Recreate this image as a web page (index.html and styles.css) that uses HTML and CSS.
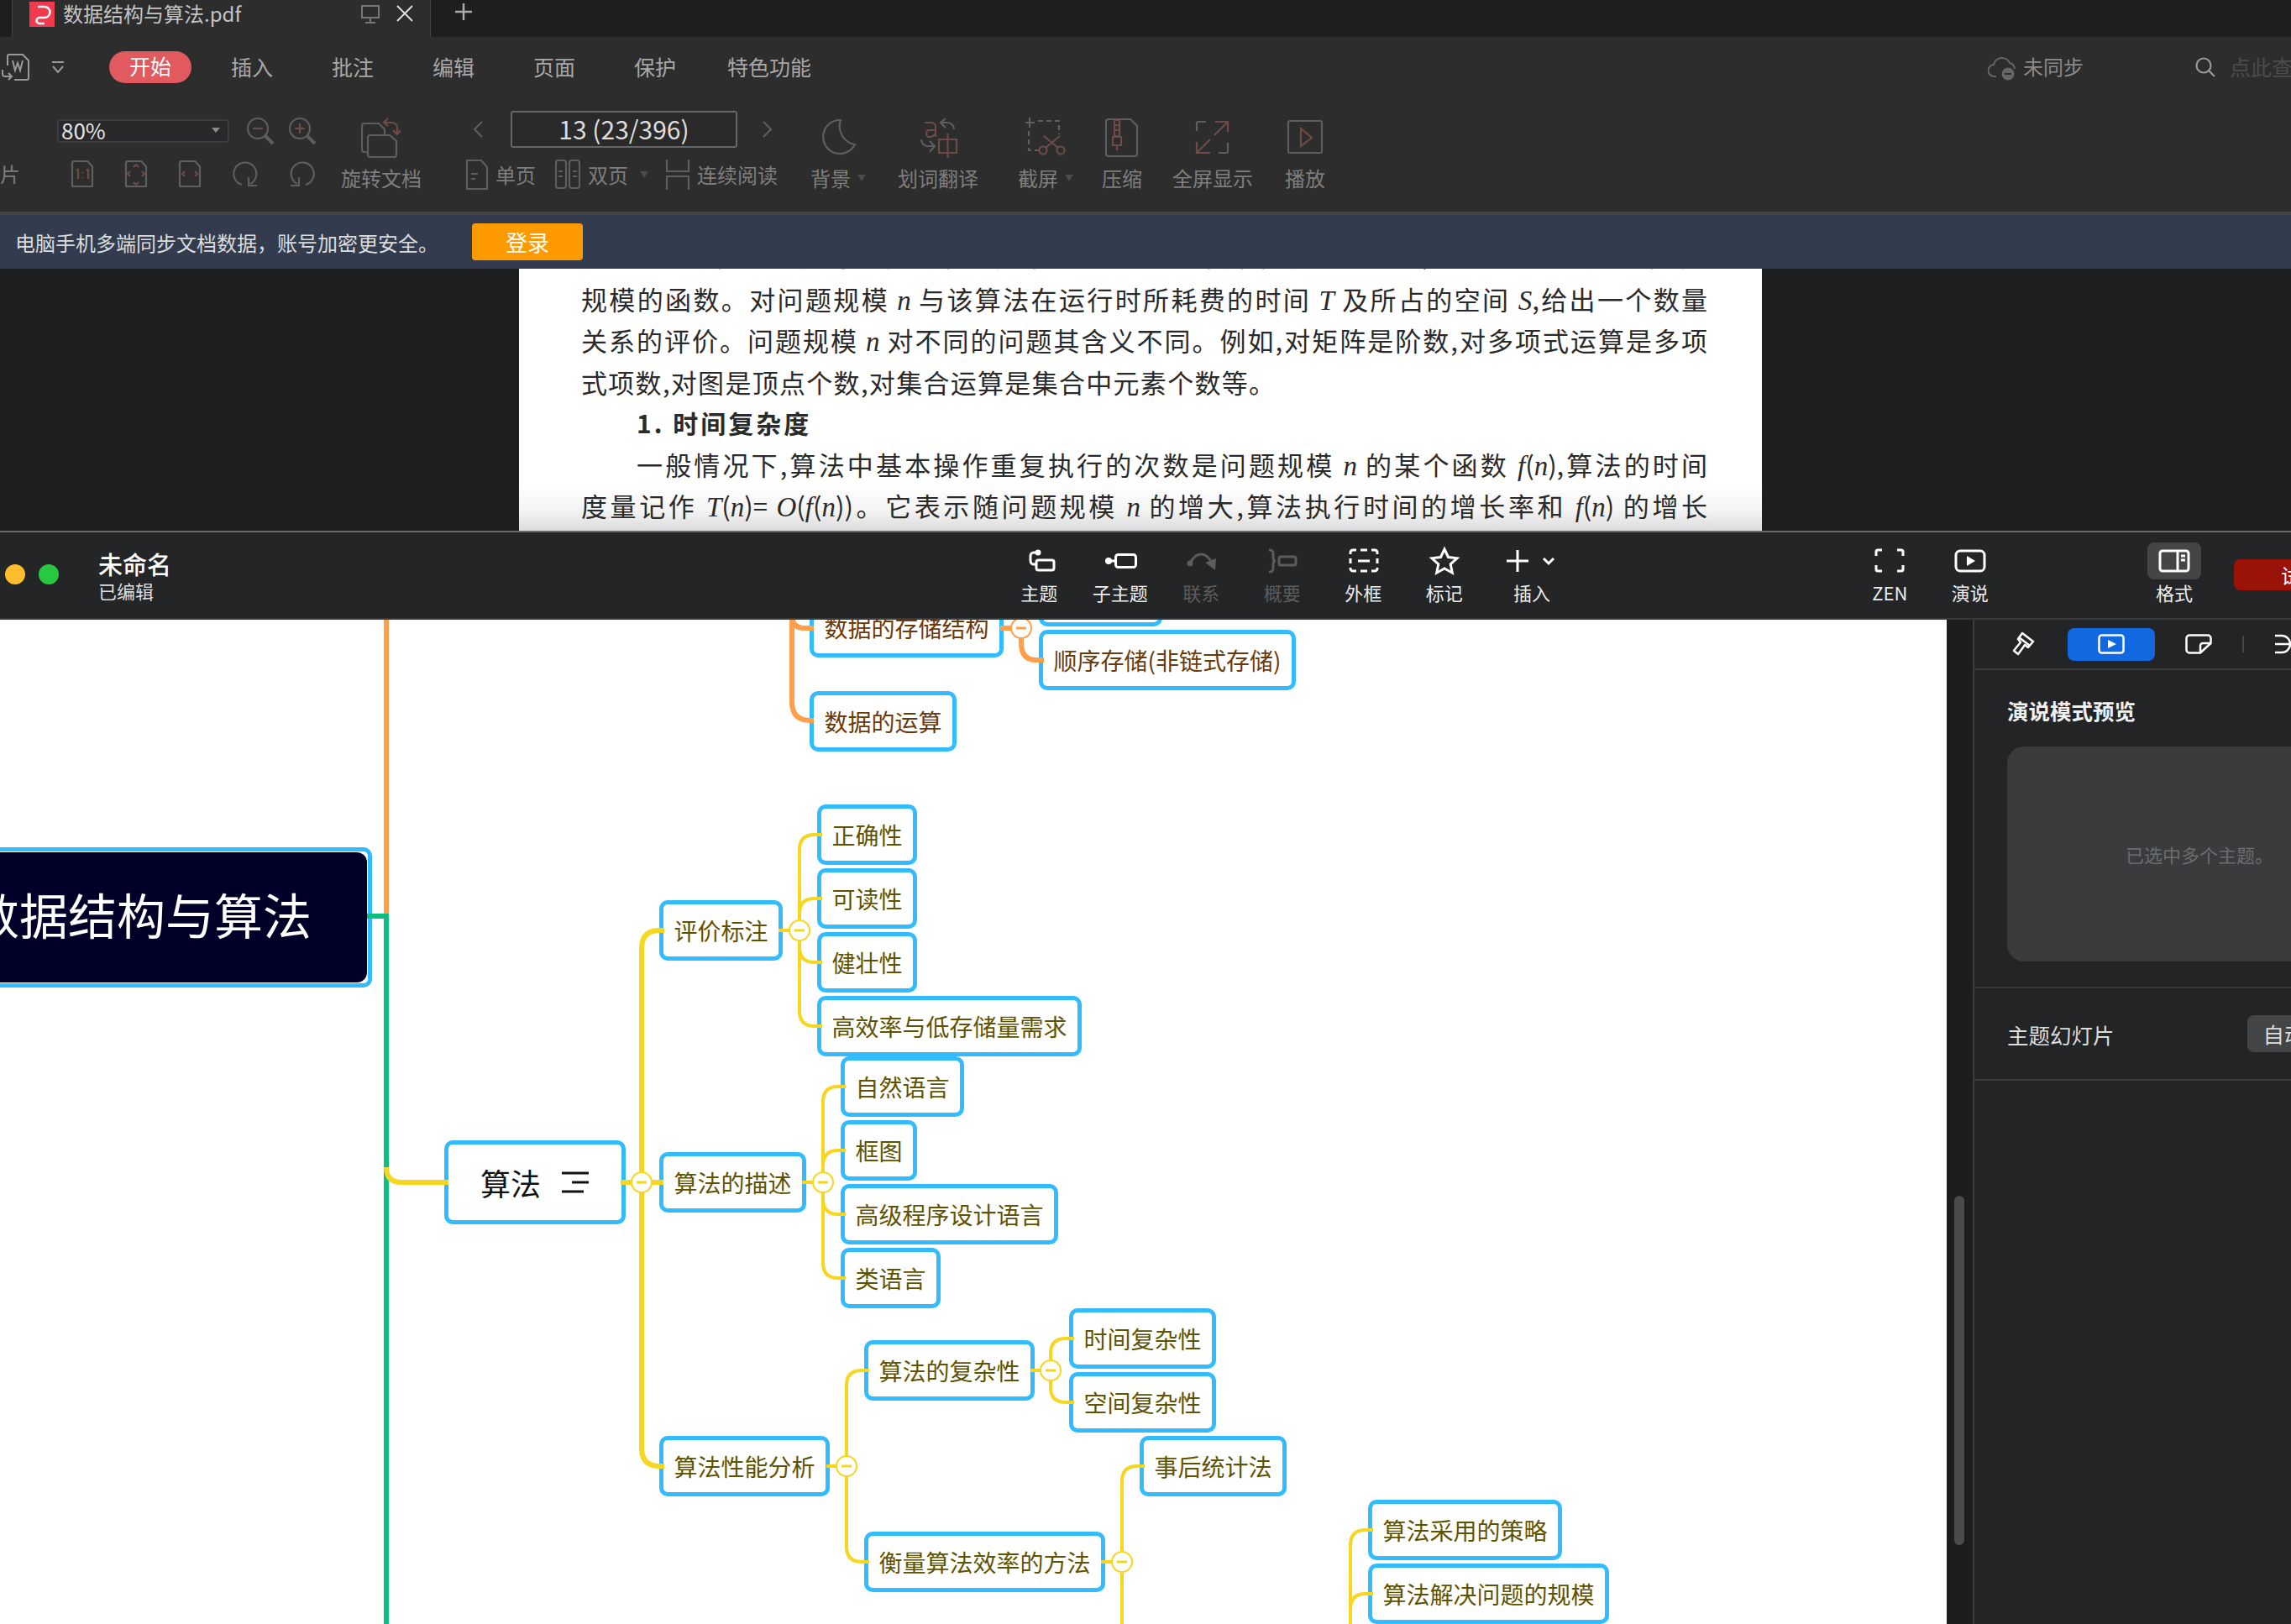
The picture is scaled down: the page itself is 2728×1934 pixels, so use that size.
FILE: index.html
```html
<!DOCTYPE html>
<html lang="zh-CN">
<head>
    <meta charset="UTF-8">
    <meta name="viewport" content="width=device-width, initial-scale=1.0">
    <title>数据结构与算法</title>
    <link rel="stylesheet" href="styles.css">
</head>
<body>
    <!-- pdf reader window -->
    <section class="pdf-win">
        <div class="tabbar">
            <div class="tab">
                <svg class="tab-logo" width="30" height="30" viewBox="0 0 30 30"><rect width="30" height="30" fill="#f23a4e"/><path d="M10 6h8a6 6 0 0 1 0 13h-6v-0M12 19a3.500 3.500 0 0 0 0 7h6" fill="none" stroke="#fff" stroke-width="2.500"/></svg>
                <span class="tab-name">数据结构与算法.pdf</span>
                <svg class="tab-pin" width="24" height="24" viewBox="0 0 24 24"><path d="M2 2h20v14H2zM12 16v6M6 22h12" fill="none" stroke="#777" stroke-width="2"/></svg>
                <svg class="tab-close" width="20" height="20" viewBox="0 0 20 20"><path d="M1 1l18 18M19 1L1 19" stroke="#ddd" stroke-width="2"/></svg>
            </div>
            <svg class="tab-add" width="20" height="20" viewBox="0 0 20 20"><path d="M10 0v20M0 10h20" stroke="#aaa" stroke-width="2.500"/></svg>
        </div>

        <div class="ribbon">
            <div class="menu">
                <svg class="menu-doc" width="34" height="32" viewBox="0 0 34 32"><path d="M7 14V3a2 2 0 0 1 2-2h16l7 7v21a2 2 0 0 1-2 2H15M13 8l3 12 3-9 3 9 3-12M1 19v5a3 3 0 0 0 3 3h7M8 23l4 4-4 4" fill="none" stroke="#9a9a9a" stroke-width="2"/></svg>
                <svg class="menu-drop" width="14" height="16" viewBox="0 0 14 16"><path d="M0 2h14M1 7l6 7 6-7" fill="none" stroke="#9a9a9a" stroke-width="2"/></svg>
                <span class="menu-on">开始</span>
                <span class="menu-item">插入</span>
                <span class="menu-item">批注</span>
                <span class="menu-item">编辑</span>
                <span class="menu-item">页面</span>
                <span class="menu-item">保护</span>
                <span class="menu-item menu-last">特色功能</span>
                <div class="menu-right">
                    <svg width="34" height="32" viewBox="0 0 34 32"><path d="M10 27H8a7 7 0 0 1-1-14 10 10 0 0 1 19-2 8 8 0 0 1 6 7" fill="none" stroke="#666" stroke-width="2"/><circle cx="24" cy="24" r="7.500" fill="#666"/><path d="M20 24h8" stroke="#2d2d2d" stroke-width="2"/></svg>
                    <span class="sync-text">未同步</span>
                    <svg class="search-ic" width="24" height="24" viewBox="0 0 24 24"><circle cx="10" cy="10" r="8.500" fill="none" stroke="#999" stroke-width="2.200"/><path d="M16 16l7 7" stroke="#999" stroke-width="2.200"/></svg>
                    <span class="search-text">点此查找命令</span>
                </div>
            </div>

            <div class="tools">
                <div class="view-col">
                    <div class="view-top">
                        <div class="zoom-select"><span>80%</span><i class="caret-sm"></i></div>
                        <svg class="ic zoom-ic" width="34" height="34" viewBox="0 0 34 34"><circle cx="14" cy="14" r="12"/><path d="M23 23l9 9" stroke-width="4"/><path class="ac" d="M8 14h12"/></svg>
                        <svg class="ic zoom-ic" width="34" height="34" viewBox="0 0 34 34"><circle cx="14" cy="14" r="12"/><path d="M23 23l9 9" stroke-width="4"/><path class="ac" d="M8 14h12M14 8v12"/></svg>
                    </div>
                    <div class="view-bottom">
                        <span class="tool-label cut-label">片</span>
                        <svg class="ic" width="28" height="32" viewBox="0 0 28 32"><path d="M2 3a2 2 0 0 1 2-2h16l6 6v23a1 1 0 0 1-1 1H3a1 1 0 0 1-1-1z"/><path class="ac" d="M7 12l2-1v11M14 14v1M14 20v1M19 12l2-1v11"/></svg>
                        <svg class="ic" width="28" height="32" viewBox="0 0 28 32"><path d="M2 3a2 2 0 0 1 2-2h16l6 6v23a1 1 0 0 1-1 1H3a1 1 0 0 1-1-1z"/><path class="ac" d="M11 8l3-3 3 3M11 26l3 3 3-3M7 13l-3 3 3 3M21 13l3 3-3 3"/></svg>
                        <svg class="ic" width="28" height="32" viewBox="0 0 28 32"><path d="M2 3a2 2 0 0 1 2-2h16l6 6v23a1 1 0 0 1-1 1H3a1 1 0 0 1-1-1z"/><path class="ac" d="M8 13l-3 3 3 3M20 13l3 3-3 3"/></svg>
                        <svg class="ic" width="32" height="32" viewBox="0 0 32 32"><path d="M12 29A13.500 13.500 0 1 1 22 28M20 20v10h10"/></svg>
                        <svg class="ic" width="32" height="32" viewBox="0 0 32 32"><path d="M20 29A13.500 13.500 0 1 0 10 28M12 20v10H2"/></svg>
                    </div>
                </div>

                <div class="tool tool-rotate">
                    <svg class="ic" width="48" height="48" viewBox="0 0 48 48"><path d="M8 41H4a3 3 0 0 1-3-3V10a3 3 0 0 1 3-3h17l7 7v7"/><path d="M11 21h23l8 7v16a3 3 0 0 1-3 3H11a3 3 0 0 1-3-3V24a3 3 0 0 1 3-3z"/><path class="ac" d="M32 1l-5 5 5 4M27 6h10a6 6 0 0 1 6 6v7M38 15l5 5 4-5"/></svg>
                    <span class="tool-label">旋转文档</span>
                </div>

                <div class="page-col">
                    <div class="page-top">
                        <svg class="ic" width="12" height="20" viewBox="0 0 12 20"><path d="M11 1L2 10l9 9"/></svg>
                        <div class="page-box">13 (23/396)</div>
                        <svg class="ic" width="12" height="20" viewBox="0 0 12 20"><path d="M1 1l9 9-9 9"/></svg>
                    </div>
                    <div class="page-bottom">
                        <svg class="ic" width="26" height="36" viewBox="0 0 26 36"><path d="M1 1h17l7 8v26H1z"/><path d="M6 17h8M6 23h5"/></svg>
                        <span class="tool-label">单页</span>
                        <svg class="ic dual-ic" width="30" height="36" viewBox="0 0 30 36"><rect x="1" y="1" width="12" height="33" rx="3"/><rect x="17" y="1" width="12" height="33" rx="3"/><path d="M4 14h5M4 20h5M21 14h5M21 20h5"/></svg>
                        <span class="tool-label">双页</span>
                        <i class="caret"></i>
                        <svg class="ic cont-ic" width="28" height="36" viewBox="0 0 28 36"><path d="M1 0v14h26V0M1 36V20h26v16"/></svg>
                        <span class="tool-label">连续阅读</span>
                    </div>
                </div>

                <div class="tool tool-bg">
                    <svg class="ic" width="48" height="48" viewBox="0 0 48 48"><path d="M27 3a20 20 0 1 0 17 29A22 22 0 0 1 27 3z"/></svg>
                    <div class="label-row"><span class="tool-label">背景</span><i class="caret"></i></div>
                </div>
                <div class="tool tool-trans">
                    <svg class="ic" width="48" height="48" viewBox="0 0 48 48"><path class="ac" d="M8 6h8a5 5 0 0 1 5 5v12M21 15H12a5 5 0 0 0 0 8h4l5-3"/><path d="M33 1l-6 5 6 6M27 6h8a8 8 0 0 1 8 8M4 26a8 8 0 0 0 8 8h8M14 28l6 6-6 7"/><path class="ac" d="M25 26h21v16H25zM35.500 19v29"/></svg>
                    <span class="tool-label">划词翻译</span>
                </div>
                <div class="tool tool-shot">
                    <svg class="ic" width="48" height="48" viewBox="0 0 48 48"><path d="M0 6h11M5 0v12"/><path stroke-dasharray="6 4" d="M15 4h25v16M4 16v23h14"/><path class="ac" d="M24 36L41 22M39 36L22 22"/><circle class="ac" cx="21" cy="39" r="4.500"/><circle class="ac" cx="42" cy="39" r="4.500"/></svg>
                    <div class="label-row"><span class="tool-label">截屏</span><i class="caret"></i></div>
                </div>
                <div class="tool tool-zip">
                    <svg class="ic" width="48" height="48" viewBox="0 0 48 48"><path d="M8 2h26l8 8v33a3 3 0 0 1-3 3H8a3 3 0 0 1-3-3V5a3 3 0 0 1 3-3z"/><path class="ac" d="M15 3h6v19h-6zM15 9h6M15 15h6M13 23h10v10H13zM18 33v6"/></svg>
                    <span class="tool-label">压缩</span>
                </div>
                <div class="tool tool-full">
                    <svg class="ic" width="48" height="48" viewBox="0 0 48 48"><path d="M5 16V7a2 2 0 0 1 2-2h9M42 30v10a2 2 0 0 1-2 2h-9"/><path class="ac" d="M27 5h15v12M42 5L26 21M21 42H5V29M5 42l16-16"/></svg>
                    <span class="tool-label">全屏显示</span>
                </div>
                <div class="tool tool-play">
                    <svg class="ic" width="48" height="48" viewBox="0 0 48 48"><rect x="4" y="4" width="40" height="38" rx="2"/><path class="ac" d="M19 13v21l13-10z"/></svg>
                    <span class="tool-label">播放</span>
                </div>
            </div>
        </div>

        <div class="banner">
            <span class="banner-text">电脑手机多端同步文档数据，账号加密更安全。</span>
            <span class="banner-btn">登录</span>
        </div>

        <div class="pdf-view">
            <div class="paper">
                <p class="line line-first">一个算法的复杂度是算法运行所需要的计算机资源的量，它是一个关于问题</p>
                <p class="line">规模的函数。对问题规模 <em>n</em> 与该算法在运行时所耗费的时间 <em>T</em> 及所占的空间 <em>S</em>,给出一个数量</p>
                <p class="line">关系的评价。问题规模 <em>n</em> 对不同的问题其含义不同。例如,对矩阵是阶数,对多项式运算是多项</p>
                <p class="line line-end">式项数,对图是顶点个数,对集合运算是集合中元素个数等。</p>
                <p class="line line-head"><b>1. 时间复杂度</b></p>
                <p class="line line-indent">一般情况下,算法中基本操作重复执行的次数是问题规模 <em>n</em> 的某个函数 <em>f</em>(<em>n</em>),算法的时间</p>
                <p class="line">度量记作 <em>T</em>(<em>n</em>)= <em>O</em>(<em>f</em>(<em>n</em>))。它表示随问题规模 <em>n</em> 的增大,算法执行时间的增长率和 <em>f</em>(<em>n</em>) 的增长</p>
            </div>
        </div>
    </section>

    <!-- mind map window -->
    <section class="mind-win">
        <header class="mind-head">
            <div class="mind-left">
                <i class="dot dot-yellow"></i>
                <i class="dot dot-green"></i>
                <div class="mind-title">
                    <div class="title-main">未命名</div>
                    <div class="title-sub">已编辑</div>
                </div>
            </div>

            <div class="mtool">
                <svg class="mic" viewBox="0 0 44 44"><circle class="solid" cx="21" cy="12" r="3.500"/><path d="M19 12h-3a4 4 0 0 0-4 4v6a4 4 0 0 0 4 4h3"/><rect x="19" y="21" width="21" height="12" rx="2.500"/></svg>
                <span>主题</span>
            </div>
            <div class="mtool">
                <svg class="mic" viewBox="0 0 44 44"><circle class="solid" cx="8" cy="22" r="4"/><path d="M8 22h8"/><rect x="16.500" y="14.500" width="24" height="15" rx="3"/></svg>
                <span>子主题</span>
            </div>
            <div class="mtool mtool-off">
                <svg class="mic" viewBox="0 0 44 44"><circle class="solid" cx="9" cy="25" r="3.500"/><path d="M9 25C16 10 28 11 35 24"/><path class="solid" d="M27 24l13-5-1 14z"/></svg>
                <span>联系</span>
            </div>
            <div class="mtool mtool-off">
                <svg class="mic" viewBox="0 0 44 44"><path d="M6 9c4 0 5 1 5 4v5c0 3 1 4 3 4-2 0-3 1-3 4v5c0 3-1 4-5 4"/><rect x="18" y="17" width="20" height="10" rx="2"/></svg>
                <span>概要</span>
            </div>
            <div class="mtool">
                <svg class="mic" viewBox="0 0 44 44"><path d="M7 14v-2a3 3 0 0 1 3-3h4M19 9h8M32 9h4a3 3 0 0 1 3 3v2M7 19v6M39 19v6M7 30v1a3 3 0 0 0 3 3h4M19 34h8M32 34h4a3 3 0 0 0 3-3v-1M16 22h14"/></svg>
                <span>外框</span>
            </div>
            <div class="mtool">
                <svg class="mic" viewBox="0 0 44 44"><path d="M22 8l4.500 9.500 10.500 1.300-7.800 7.100 2.100 10.300-9.300-5.200-9.300 5.200 2.100-10.300-7.800-7.100 10.500-1.300z"/></svg>
                <span>标记</span>
            </div>
            <div class="mtool mtool-add">
                <svg class="mic-wide" viewBox="0 0 72 44"><path d="M19 9v26M6 22h26M50 19l6 6 6-6"/></svg>
                <span>插入</span>
            </div>

            <div class="mtool mtool-zen">
                <svg class="mic" viewBox="0 0 44 44"><path d="M13 9H8a2 2 0 0 0-2 2v5M31 9h5a2 2 0 0 1 2 2v5M13 34H8a2 2 0 0 1-2-2v-5M31 34h5a2 2 0 0 0 2-2v-5"/></svg>
                <span>ZEN</span>
            </div>
            <div class="mtool">
                <svg class="mic" viewBox="0 0 44 44"><rect x="5" y="10" width="34" height="24" rx="5"/><path class="solid" d="M18 16l10 6-10 6z"/></svg>
                <span>演说</span>
            </div>
            <div class="mtool mtool-format">
                <div class="mic-on">
                    <svg class="mic" viewBox="0 0 44 44"><rect x="5" y="10" width="34" height="24" rx="3"/><path d="M26 10v24M30 16h5M30 21h5"/></svg>
                </div>
                <span>格式</span>
            </div>
            <div class="trial-btn">试用</div>
        </header>

        <div class="mind-body">
            <div class="canvas">
                <div class="node node-root"><div class="root-fill">数据结构与算法</div></div>

                <div class="node node-brown n-store">数据的存储结构</div>
                <div class="node node-brown n-link">链式存储</div>
                <div class="node node-brown n-seq">顺序存储(非链式存储)</div>
                <div class="node node-brown n-calc">数据的运算</div>

                <div class="node node-main n-algo">算法
                    <svg class="note-ic" width="32" height="26" viewBox="0 0 32 26"><path d="M0 2h32M12 13h20M0 24h26" stroke="#111" stroke-width="3"/></svg>
                </div>

                <div class="node n-eval">评价标注</div>
                <div class="node n-right">正确性</div>
                <div class="node n-read">可读性</div>
                <div class="node n-robust">健壮性</div>
                <div class="node n-eff">高效率与低存储量需求</div>

                <div class="node n-desc">算法的描述</div>
                <div class="node n-nat">自然语言</div>
                <div class="node n-flow">框图</div>
                <div class="node n-high">高级程序设计语言</div>
                <div class="node n-pseudo">类语言</div>

                <div class="node n-perf">算法性能分析</div>
                <div class="node n-cplx">算法的复杂性</div>
                <div class="node n-time">时间复杂性</div>
                <div class="node n-space">空间复杂性</div>
                <div class="node n-measure">衡量算法效率的方法</div>
                <div class="node n-post">事后统计法</div>
                <div class="node n-strategy">算法采用的策略</div>
                <div class="node n-scale">算法解决问题的规模</div>

                <!-- connectors, drawn in window coordinates -->
                <svg class="links" viewBox="0 738 2318 1196">
                    <g class="link-orange">
                        <path d="M460 738V1091"/>
                        <path d="M969 748H958Q943 748 943 733V836Q943 858 965 858H969"/>
                        <path d="M1191 748H1204M1216 738V766Q1216 786 1234 786H1243"/>
                        <circle cx="1216" cy="748" r="12"/>
                        <path class="minus" d="M1210 748H1222"/>
                    </g>
                    <path class="link-green" d="M437 1091H460V1934"/>
                    <g class="link-yellow">
                        <path class="thick" d="M460 1390Q460 1408 478 1408H534M739 1408H790"/>
                        <path class="thick" d="M791 1108H785Q764 1108 764 1130V1724Q764 1746 785 1746H791"/>

                        <path d="M927 1108H940M979 994H970Q952 994 952 1012V1204Q952 1222 970 1222H979M979 1070H970Q952 1070 952 1088M979 1146H970Q952 1146 952 1128"/>
                        <path d="M955 1408H968M1007 1294H998Q980 1294 980 1312V1504Q980 1522 998 1522H1007M1007 1370H998Q980 1370 980 1388M1007 1446H998Q980 1446 980 1428"/>
                        <path d="M984 1746H996M1035 1632H1026Q1008 1632 1008 1650V1842Q1008 1860 1026 1860H1035"/>
                        <path d="M1227 1632H1240M1279 1594H1269Q1251 1594 1251 1612V1652Q1251 1670 1269 1670H1279"/>
                        <path d="M1311 1860H1324M1363 1746H1354Q1336 1746 1336 1764V1934"/>
                        <path d="M1635 1822H1626Q1608 1822 1608 1840V1934M1635 1898H1626Q1608 1898 1608 1916"/>

                        <circle cx="764" cy="1408" r="12"/><path class="minus" d="M758 1408H770"/>
                        <circle cx="952" cy="1108" r="12"/><path class="minus" d="M946 1108H958"/>
                        <circle cx="980" cy="1408" r="12"/><path class="minus" d="M974 1408H986"/>
                        <circle cx="1008" cy="1746" r="12"/><path class="minus" d="M1002 1746H1014"/>
                        <circle cx="1251" cy="1632" r="12"/><path class="minus" d="M1245 1632H1257"/>
                        <circle cx="1336" cy="1860" r="12"/><path class="minus" d="M1330 1860H1342"/>
                    </g>
                </svg>
            </div>

            <div class="gutter"><div class="thumb"></div></div>

            <aside class="panel">
                <div class="panel-tabs">
                    <div class="ptab">
                        <svg width="28" height="32" viewBox="0 0 28 32"><path d="M12 3l13 10-6 7-4-3-5 7-3 4-5-4 3-4 5-6-3-4z" fill="none" stroke="#fff" stroke-width="2.500" stroke-linejoin="round"/><path d="M8 8l13 10" stroke="#fff" stroke-width="2.500"/></svg>
                    </div>
                    <div class="ptab ptab-on">
                        <svg width="32" height="24" viewBox="0 0 32 24"><rect x="1.500" y="1.500" width="29" height="21" rx="3" fill="none" stroke="#fff" stroke-width="2.500"/><path d="M12 7l10 5-10 5z" fill="#fff"/></svg>
                    </div>
                    <div class="ptab">
                        <svg width="32" height="24" viewBox="0 0 32 24"><path d="M18 22.500H5a3.500 3.500 0 0 1-3.500-3.500V5A3.500 3.500 0 0 1 5 1.500h22A3.500 3.500 0 0 1 30.500 5v6zM18 22.500V14a3 3 0 0 1 3-3h9.500" fill="none" stroke="#fff" stroke-width="2.500" stroke-linejoin="round"/></svg>
                    </div>
                    <i class="ptab-sep"></i>
                    <svg class="ptab-last" width="40" height="24" viewBox="0 0 40 24"><path d="M2 2h8a10 10 0 0 1 0 20H2M2 12h18M34 2a10 10 0 0 0 0 20" fill="none" stroke="#fff" stroke-width="2.500"/></svg>
                </div>
                <div class="panel-sec">
                    <div class="sec-title">演说模式预览</div>
                    <div class="preview"><span>已选中多个主题。</span></div>
                </div>
                <div class="panel-row">
                    <span>主题幻灯片</span>
                    <div class="auto-btn">自动</div>
                </div>
            </aside>
        </div>
    </section>
</body>
</html>
```

FILE: styles.css
```css
* {
    box-sizing: border-box;
}
html, body {
    margin: 0;
    height: 1934px;
    overflow: hidden;
}
body {
    background-color: #1d1e20;
    font-family: "Noto Sans CJK SC", "Noto Sans", sans-serif;
    color: #ddd;
}
p {
    margin: 0;
}
svg {
    display: block;
    flex: none;
}

/* pdf window */
.pdf-win {
    height: 632px;
}
.tabbar {
    display: flex;
    align-items: flex-start;
    height: 44px;
    background-color: #1e1e1e;
}
.tab {
    display: flex;
    align-items: flex-start;
    width: 499px;
    height: 44px;
    margin-left: 14px;
    padding-left: 20px;
    background-color: #2d2d2d;
    border-left: 1px solid #444;
    border-right: 1px solid #444;
}
.tab-logo {
    margin-top: 2px;
}
.tab-name {
    margin-left: 10px;
    font-size: 24px;
    line-height: 32px;
    color: #c4c4c4;
}
.tab-pin {
    margin: 5px 0 0 142px;
}
.tab-close {
    margin: 6px 0 0 19px;
}
.tab-add {
    margin: 4px 0 0 29px;
}

.ribbon {
    height: 212px;
    background-color: #2d2d2d;
    border-bottom: 4px solid #444;
}
.menu {
    display: flex;
    align-items: center;
    height: 72px;
    padding-left: 2px;
    font-size: 25px;
    color: #a8a8a8;
    white-space: nowrap;
}
.menu-drop {
    margin-left: 26px;
}
.menu-on {
    width: 98px;
    height: 38px;
    margin: 0 12px 0 54px;
    border-radius: 19px;
    background-color: #e05a5f;
    color: #fff;
    text-align: center;
    line-height: 35px;
}
.menu-item {
    padding: 0 35px 3px;
}
.menu-last {
    margin-left: -9px;
}
.menu-right {
    display: flex;
    align-items: center;
    flex: none;
    width: 363px;
    margin-left: auto;
    margin-right: -2px;
    overflow: hidden;
}
.sync-text {
    margin: 0 0 3px 8px;
    font-size: 24px;
    color: #8a8a8a;
}
.search-ic {
    margin-left: 133px;
}
.search-text {
    margin: 0 0 3px 17px;
    font-size: 25px;
    color: #4c4c4c;
}

.tools {
    display: flex;
    height: 136px;
    white-space: nowrap;
}
.ic {
    fill: none;
    stroke: #5e5e5e;
    stroke-width: 2.200;
}
.ic .ac, .ac {
    stroke: #6e4a48;
}
.tool-label {
    font-size: 24px;
    line-height: 24px;
    color: #7e7e7e;
}
.caret {
    display: inline-block;
    width: 0;
    height: 0;
    border-left: 5px solid transparent;
    border-right: 5px solid transparent;
    border-top: 8px solid #4c4c4c;
}

.view-col {
    flex: none;
    width: 406px;
}
.view-top {
    display: flex;
    align-items: center;
    height: 34px;
    margin-top: 23px;
    padding-left: 68px;
}
.zoom-select {
    display: flex;
    align-items: center;
    justify-content: space-between;
    width: 205px;
    height: 28px;
    padding: 0 9px 3px 3px;
    background-color: #29292b;
    border: 2px solid #3d3d3d;
    border-radius: 4px;
    font-size: 26px;
    color: #e4e4e4;
}
.caret-sm {
    width: 0;
    height: 0;
    border-left: 5px solid transparent;
    border-right: 5px solid transparent;
    border-top: 6px solid #8c8c8c;
}
.zoom-ic {
    margin-left: 20px;
}
.zoom-ic + .zoom-ic {
    margin-left: 16px;
}
.view-bottom {
    display: flex;
    align-items: center;
    gap: 36px;
    height: 32px;
    margin-top: 18px;
}
.cut-label {
    width: 22px;
    margin-right: 26px;
    overflow: hidden;
}

.tool {
    display: flex;
    flex: none;
    flex-direction: column;
    align-items: center;
    padding-top: 24px;
}
.tool .ic {
    margin-bottom: 12px;
}
.label-row {
    display: flex;
    align-items: center;
    gap: 8px;
}
.tool-rotate {
    width: 96px;
}
.page-col {
    flex: none;
    width: 370px;
    margin-left: 53px;
}
.page-top {
    display: flex;
    align-items: center;
    height: 44px;
    margin-top: 16px;
    padding-left: 8px;
}
.page-box {
    width: 270px;
    height: 44px;
    margin: 0 30px 0 33px;
    border: 2px solid #666;
    border-radius: 3px;
    background-color: #2a2a2a;
    color: #ddd;
    font-size: 30px;
    line-height: 38px;
    text-align: center;
}
.page-bottom {
    display: flex;
    align-items: center;
    height: 36px;
    margin-top: 14px;
}
.page-bottom .tool-label {
    margin-left: 9px;
}
.page-bottom .caret {
    margin-left: 14px;
}
.dual-ic {
    margin-left: 23px;
}
.cont-ic {
    margin-left: 21px;
}
.tool-bg {
    width: 66px;
    margin-left: 40px;
}
.tool-trans {
    width: 96px;
    margin-left: 38px;
}
.tool-shot {
    width: 70px;
    margin-left: 45px;
}
.tool-zip {
    width: 48px;
    margin-left: 32px;
}
.tool-full {
    width: 96px;
    margin-left: 36px;
}
.tool-play {
    width: 48px;
    margin-left: 38px;
}

.banner {
    display: flex;
    align-items: center;
    height: 64px;
    padding-left: 18px;
    background-color: #323c4e;
}
.banner-text {
    width: 544px;
    font-size: 24px;
    color: #dcdcdc;
}
.banner-btn {
    width: 132px;
    height: 44px;
    border-radius: 4px;
    background-color: #ff9900;
    color: #fff;
    font-size: 26px;
    line-height: 44px;
    text-align: center;
}

.pdf-view {
    height: 312px;
    padding-left: 618px;
    background-color: #1d1e20;
}
.paper {
    width: 1480px;
    height: 312px;
    padding: 0 65px 0 74px;
    overflow: hidden;
    background: linear-gradient(#fff 82%, #f4f4f4 92%, #dcdcdc 100%);
    color: #2a2a2a;
    font-size: 31px;
}
.paper em {
    font-family: "Liberation Serif", serif;
    font-size: 33px;
    line-height: 1;
}
.line {
    height: 49.200px;
    line-height: 49.200px;
    white-space: nowrap;
    text-align: justify;
    text-align-last: justify;
    text-justify: inter-character;
}
.line-first {
    height: 52.200px;
    margin-top: -41px;
    padding-left: 66px;
}
.line-end {
    text-align-last: left;
    letter-spacing: 1.300px;
}
.line-head {
    padding-left: 66px;
    text-align-last: left;
    font-size: 30px;
    letter-spacing: 3px;
}
.line-indent {
    padding-left: 66px;
}

/* mind map window */
.mind-win {
    height: 1302px;
}
.mind-head {
    display: flex;
    align-items: flex-start;
    height: 106px;
    padding-top: 12px;
    overflow: hidden;
    background-color: #242527;
    border-top: 2px solid #6a6a6a;
    border-bottom: 2px solid #38393b;
}
.mind-left {
    display: flex;
    flex: none;
    width: 1189px;
    padding-left: 6px;
}
.dot {
    width: 24px;
    height: 24px;
    margin: 26px 16px 0 0;
    border-radius: 50%;
}
.dot-yellow {
    background-color: #febc2e;
}
.dot-green {
    background-color: #28c940;
}
.mind-title {
    margin-left: 31px;
}
.title-main {
    margin-top: 5px;
    font-size: 29px;
    font-weight: 500;
    line-height: 40px;
    color: #fff;
}
.title-sub {
    margin-top: -1px;
    font-size: 22px;
    line-height: 26px;
    color: #ddd;
}
.mtool {
    display: flex;
    flex: none;
    flex-direction: column;
    align-items: center;
    width: 96.500px;
    color: #eee;
    font-size: 22px;
    line-height: 22px;
}
.mtool > span {
    margin-top: 4px;
}
.mic {
    width: 44px;
    height: 44px;
    fill: none;
    stroke: #fff;
    stroke-width: 3;
}
.mic-wide {
    width: 72px;
    height: 44px;
    fill: none;
    stroke: #fff;
    stroke-width: 3;
}
.mic .solid {
    fill: #fff;
    stroke: none;
}
.mtool-off {
    color: #5c5c5c;
}
.mtool-off .mic {
    stroke: #5c5c5c;
}
.mtool-off .mic .solid {
    fill: #5c5c5c;
}
.mtool-add {
    width: 112px;
}
.mtool-zen {
    width: 94.500px;
    margin-left: 323px;
}
.mtool-format {
    width: 64px;
    margin-left: 163px;
}
.mic-on {
    display: flex;
    justify-content: center;
    width: 64px;
    height: 44px;
    border-radius: 8px;
    background-color: #444546;
}
.trial-btn {
    flex: none;
    width: 180px;
    height: 37px;
    margin: 20px 0 0 39px;
    padding-left: 56px;
    border-radius: 8px;
    background-color: #9a1208;
    color: #fff;
    font-size: 24px;
    line-height: 37px;
}

.mind-body {
    display: flex;
    height: 1196px;
}
.canvas {
    position: relative;
    flex: none;
    width: 2318px;
    height: 1196px;
    overflow: hidden;
    background-color: #fff;
}
.links {
    position: absolute;
    left: 0;
    top: 0;
    width: 2318px;
    height: 1196px;
    fill: none;
}
.links path {
    stroke-width: 4;
}
.links path.thick, .links path.link-green, .link-orange path {
    stroke-width: 6;
}
.links circle {
    fill: #fff;
    stroke-width: 2;
}
.links path.minus, .link-orange path.minus {
    stroke-width: 3;
}
.link-orange path, .link-orange circle {
    stroke: #ff9f4b;
}
.links .link-green {
    stroke: #0cbf80;
}
.link-yellow path, .link-yellow circle {
    stroke: #f6d61f;
}

.node {
    position: absolute;
    height: 72px;
    padding: 0 12.500px;
    background-color: #fff;
    border: 5px solid #33bbff;
    border-radius: 10px;
    color: #5f5200;
    font-size: 28px;
    line-height: 63px;
    white-space: nowrap;
}
.node-brown {
    color: #6a390c;
}
.node-main {
    display: flex;
    align-items: center;
    gap: 25px;
    height: 100px;
    padding: 0 39px 0 38px;
    color: #111;
    font-size: 36px;
}
.node-root {
    left: -200px;
    top: 271px;
    width: 643px;
    height: 167px;
    padding: 1px;
}
.root-fill {
    height: 100%;
    padding-right: 66px;
    border-radius: 12px;
    background-color: #000028;
    color: #fff;
    font-size: 58px;
    line-height: 146px;
    text-align: right;
}

.n-store { left: 964px; top: -27px; }
.n-link { left: 1237px; top: -64px; }
.n-seq { left: 1237px; top: 12px; }
.n-calc { left: 964px; top: 85px; }
.n-algo { left: 529px; top: 620px; }
.n-eval { left: 785px; top: 334px; }
.n-right { left: 973px; top: 220px; }
.n-read { left: 973px; top: 296px; }
.n-robust { left: 973px; top: 372px; }
.n-eff { left: 973px; top: 448px; }
.n-desc { left: 785px; top: 634px; }
.n-nat { left: 1001px; top: 520px; }
.n-flow { left: 1001px; top: 596px; }
.n-high { left: 1001px; top: 672px; }
.n-pseudo { left: 1001px; top: 748px; }
.n-perf { left: 785px; top: 972px; }
.n-cplx { left: 1029px; top: 858px; }
.n-time { left: 1273px; top: 820px; }
.n-space { left: 1273px; top: 896px; }
.n-measure { left: 1029px; top: 1086px; }
.n-post { left: 1357px; top: 972px; }
.n-strategy { left: 1629px; top: 1048px; }
.n-scale { left: 1629px; top: 1124px; }

.gutter {
    flex: none;
    width: 31px;
    background-color: #1c1d1f;
}
.thumb {
    width: 12px;
    height: 416px;
    margin: 686px 0 0 9px;
    border-radius: 6px;
    background-color: #4a4b4d;
}
.panel {
    flex: none;
    width: 379px;
    overflow: hidden;
    background-color: #232426;
    border-left: 2px solid #3a3b3d;
}
.panel-tabs {
    display: flex;
    align-items: center;
    height: 60px;
    padding-left: 7px;
    border-bottom: 2px solid #3a3b3d;
}
.ptab {
    display: flex;
    flex: none;
    align-items: center;
    justify-content: center;
    width: 104px;
    height: 39px;
    border-radius: 8px;
}
.ptab-on {
    background-color: #1268e0;
}
.ptab-sep {
    flex: none;
    width: 2px;
    height: 20px;
    background-color: #444;
}
.ptab-last {
    margin-left: 35px;
}
.panel-sec {
    height: 379px;
    padding: 33px 0 0 39px;
    border-bottom: 2px solid #3a3b3d;
}
.sec-title {
    font-size: 25.500px;
    font-weight: 700;
    line-height: 30px;
    color: #f0f0f0;
}
.preview {
    display: flex;
    align-items: center;
    justify-content: center;
    width: 458px;
    height: 256px;
    margin-top: 28px;
    border-radius: 20px;
    background-color: #3a3b3d;
    color: #6c6d6f;
    font-size: 22px;
}
.panel-row {
    display: flex;
    align-items: center;
    height: 110px;
    padding-left: 39px;
    border-bottom: 2px solid #3a3b3d;
    font-size: 25.500px;
    color: #dcdcdc;
    white-space: nowrap;
}
.auto-btn {
    flex: none;
    width: 120px;
    height: 44px;
    margin-left: 158px;
    padding-left: 19px;
    border-radius: 8px;
    background-color: #444546;
    line-height: 43px;
}
```
